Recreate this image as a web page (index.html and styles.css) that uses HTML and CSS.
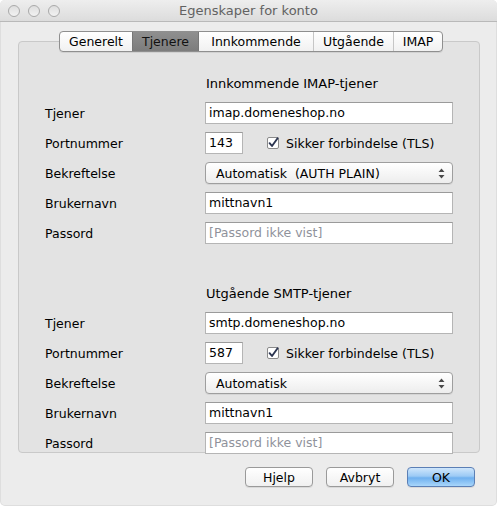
FILE: index.html
```html
<!DOCTYPE html>
<html>
<head>
<meta charset="utf-8">
<link rel="stylesheet" href="styles.css">
</head>
<body>
<div class="window">
  <div class="titlebar">
    <div class="lights"><span class="light"></span><span class="light"></span><span class="light"></span></div>
    <div class="title">Egenskaper for konto</div>
  </div>
  <div class="tabs">
    <div class="tab t1">Generelt</div>
    <div class="tab t2 selected">Tjenere</div>
    <div class="tab t3">Innkommende</div>
    <div class="tab t4">Utgående</div>
    <div class="tab t5">IMAP</div>
  </div>
  <div class="box">
    <div class="section">
      <div class="heading">Innkommende IMAP-tjener</div>
      <div class="row"><span class="label">Tjener</span><div class="field">imap.domeneshop.no</div></div>
      <div class="row"><span class="label">Portnummer</span>
        <div class="portline"><div class="field port">143</div><span class="check"><svg width="12" height="12" viewBox="0 0 12 12"><rect x="0.5" y="0.5" width="11" height="11" rx="1.5" fill="#fff" stroke="#8a8a8a"/><path d="M2.6 6.2 L5 9 L10.6 1.2" fill="none" stroke="#2b3551" stroke-width="1.9" stroke-linecap="round" stroke-linejoin="round"/></svg></span><span class="checklabel">Sikker forbindelse (TLS)</span></div>
      </div>
      <div class="row"><span class="label">Bekreftelse</span><div class="popup"><span>Automatisk&nbsp; (AUTH PLAIN)</span><svg class="arrows" width="7" height="11" viewBox="0 0 7 11"><path d="M3.5 0.5 L6.5 4 L0.5 4 Z M3.5 10.5 L6.5 7 L0.5 7 Z" fill="#4a4a4a"/></svg></div></div>
      <div class="row"><span class="label">Brukernavn</span><div class="field">mittnavn1</div></div>
      <div class="row"><span class="label">Passord</span><div class="field placeholder">[Passord ikke vist]</div></div>
    </div>
    <div class="section second">
      <div class="heading">Utgående SMTP-tjener</div>
      <div class="row"><span class="label">Tjener</span><div class="field">smtp.domeneshop.no</div></div>
      <div class="row"><span class="label">Portnummer</span>
        <div class="portline"><div class="field port">587</div><span class="check"><svg width="12" height="12" viewBox="0 0 12 12"><rect x="0.5" y="0.5" width="11" height="11" rx="1.5" fill="#fff" stroke="#8a8a8a"/><path d="M2.6 6.2 L5 9 L10.6 1.2" fill="none" stroke="#2b3551" stroke-width="1.9" stroke-linecap="round" stroke-linejoin="round"/></svg></span><span class="checklabel">Sikker forbindelse (TLS)</span></div>
      </div>
      <div class="row"><span class="label">Bekreftelse</span><div class="popup"><span>Automatisk</span><svg class="arrows" width="7" height="11" viewBox="0 0 7 11"><path d="M3.5 0.5 L6.5 4 L0.5 4 Z M3.5 10.5 L6.5 7 L0.5 7 Z" fill="#4a4a4a"/></svg></div></div>
      <div class="row"><span class="label">Brukernavn</span><div class="field">mittnavn1</div></div>
      <div class="row"><span class="label">Passord</span><div class="field placeholder">[Passord ikke vist]</div></div>
    </div>
  </div>
  <div class="buttons">
    <div class="btn">Hjelp</div>
    <div class="btn">Avbryt</div>
    <div class="btn default">OK</div>
  </div>
</div>
</body>
</html>
```

FILE: styles.css
```css
html, body {
  margin: 0;
  padding: 0;
  background: #ffffff;
}
body {
  font-family: "DejaVu Sans", "Liberation Sans", sans-serif;
  font-size: 12px;
  color: #000;
}
.window {
  width: 497px;
  height: 506px;
  background: #ececec;
  border-radius: 5px;
  overflow: hidden;
  box-shadow: inset 0 0 0 1px rgba(0,0,0,0.06);
  display: flex;
  flex-direction: column;
}
.titlebar {
  height: 21px;
  flex: none;
  background: linear-gradient(#eeeeee, #dcdcdc);
  border-bottom: 1px solid #b9b9b9;
  display: flex;
  align-items: center;
  position: relative;
}
.lights {
  display: flex;
  gap: 8px;
  padding-left: 8px;
}
.light {
  width: 10px;
  height: 10px;
  border-radius: 50%;
  border: 1px solid #a9a9a9;
  background: linear-gradient(#dedede, #f2f2f2);
}
.title {
  position: absolute;
  left: 0;
  right: 0;
  text-align: center;
  font-size: 13px;
  color: #626262;
  line-height: 21px;
}
.tabs {
  position: relative;
  z-index: 1;
  display: flex;
  margin: 9px 0 0 59px;
  height: 21px;
  width: 384px;
  box-sizing: border-box;
  border: 1px solid #8f8f8f;
  border-radius: 4px;
  background: linear-gradient(#ffffff, #f1f1f1);
  overflow: hidden;
  box-shadow: 0 1px 0 rgba(0,0,0,0.08);
}
.tab {
  display: flex;
  align-items: center;
  justify-content: center;
  font-size: 12.5px;
  color: #000;
  border-left: 1px solid #c6c6c6;
  box-sizing: border-box;
}
.tab.t1 { width: 72px; border-left: none; }
.tab.t2 { width: 67px; }
.tab.t3 { width: 114px; }
.tab.t4 { width: 80px; }
.tab.t5 { width: 49px; }
.tab.selected {
  background: linear-gradient(#8f8f8f, #7c7c7c);
  border-left-color: #777;
  border-right: 1px solid #777;
  color: #111;
}
.tab.selected + .tab { border-left: none; }
.box {
  margin: -11px 0 0 18px;
  width: 462px;
  height: 412px;
  box-sizing: border-box;
  background: #e3e3e3;
  border: 1px solid #c9c9c9;
  border-radius: 4px;
  padding: 34px 0 0 26px;
}
.section {
  display: flex;
  flex-direction: column;
  gap: 8px;
}
.section.second {
  margin-top: 42px;
}
.heading {
  padding-left: 161px;
  height: 16px;
  line-height: 16px;
  margin-bottom: 2px;
  font-size: 13px;
}
.row {
  display: grid;
  grid-template-columns: 160px 248px;
  align-items: center;
  height: 22px;
}
.label {
  font-size: 12.5px;
}
.field {
  height: 22px;
  box-sizing: border-box;
  background: #fff;
  border: 1px solid #b5b5b5;
  border-top-color: #9a9a9a;
  padding: 0 3px;
  line-height: 20px;
  font-size: 12.5px;
  color: #000;
  white-space: nowrap;
}
.field.placeholder {
  color: #8f929b;
}
.portline {
  display: flex;
  align-items: center;
}
.field.port {
  width: 38px;
}
.check {
  display: flex;
  margin-left: 24px;
  margin-right: 7px;
}
.checklabel {
  font-size: 12.5px;
}
.popup {
  height: 22px;
  box-sizing: border-box;
  border: 1px solid #9e9e9e;
  border-radius: 4px;
  background: linear-gradient(#ffffff, #ededed);
  box-shadow: 0 1px 0 rgba(0,0,0,0.06);
  display: flex;
  align-items: center;
  justify-content: space-between;
  padding: 0 7px 0 10px;
  font-size: 12.5px;
  color: #000;
}
.buttons {
  display: flex;
  justify-content: flex-end;
  gap: 13px;
  padding: 14px 22px 0 0;
}
.btn {
  width: 68px;
  height: 20px;
  box-sizing: border-box;
  border: 1px solid #9a9a9a;
  border-radius: 4px;
  background: linear-gradient(#ffffff, #f0f0f0);
  box-shadow: 0 1px 0 rgba(0,0,0,0.08);
  display: flex;
  align-items: center;
  justify-content: center;
  font-size: 12.5px;
  color: #000;
}
.btn.default {
  border-color: #5b7fb5;
  background: linear-gradient(#cfe6fc 0%, #9ccaf5 45%, #6fb0ef 55%, #a8d6fb 100%);
}
```
